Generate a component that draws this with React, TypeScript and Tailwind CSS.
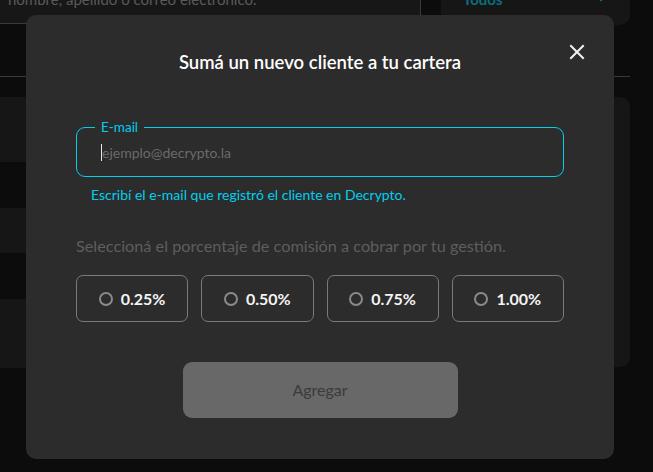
import { ChevronDown } from "lucide-react";

const options = ["0.25%", "0.50%", "0.75%", "1.00%"];

const rows = [
    { h: "h-[65px]", bg: "bg-[#161616]" },
    { h: "h-[46px]", bg: "bg-[#0c0c0c]" },
    { h: "h-[45px]", bg: "bg-[#161616]" },
    { h: "h-[46px]", bg: "bg-[#0c0c0c]" },
    { h: "h-[69px]", bg: "bg-[#161616]" },
];

const Background = () => (
    <div className="flex flex-col h-full">
        <div className="flex h-[25px]">
            <div className="w-[421px] h-[24px] bg-[#171717] border-b border-[#3a3a3a] border-r flex items-end pl-[8px] overflow-hidden">
                <span className="text-[15px] text-[#5a5a5a] leading-none relative -top-[16px]">
                    nombre, apellido o correo electrónico.
                </span>
            </div>
            <div className="w-[20px]" />
            <div className="w-[189px] bg-[#161616] rounded-b-[10px] flex justify-between px-[22px] overflow-hidden">
                <span className="text-[15px] text-[#0b6f7c] font-bold relative -top-[12px]">Todos</span>
                <ChevronDown size={14} className="text-[#0b6f7c] relative -top-[8px]" />
            </div>
        </div>
        <div className="w-[630px] h-[52px] border-b border-[#3a3a3a]" />
        <div className="h-[20px]" />
        <div className="flex w-[630px]">
            <div className="w-[300px] flex flex-col">
                {rows.map((r, i) => (
                    <div key={i} className={`${r.h} ${r.bg}`} />
                ))}
            </div>
            <div className="flex-1 h-[270px] bg-[#161616] rounded-r-[10px]" />
        </div>
    </div>
);

const CloseIcon = () => (
    <svg width="16" height="16" viewBox="0 0 16 16" fill="none" stroke="currentColor" strokeWidth="2" strokeLinecap="square">
        <path d="M2 2L14 14M14 2L2 14" />
    </svg>
);

export default function App() {
    return (
        <div
            className="relative w-[653px] h-[472px] bg-[#0c0c0c] overflow-hidden"
            style={{ fontFamily: "Lato, 'Noto Sans', sans-serif" }}
        >
            <Background />

            <div className="absolute left-[26px] top-[15px] w-[588px] h-[444px] bg-[#2c2c2c] rounded-[10px] flex flex-col items-center pt-[35px] px-[50px]">
                <button className="absolute right-[29px] top-[29px] text-[#f2f2f2]">
                    <CloseIcon />
                </button>

                <h2 className="h-[24px] text-[18.5px] font-semibold text-white leading-[24px]">
                    Sumá un nuevo cliente a tu cartera
                </h2>

                <div className="w-full mt-[53px]">
                    <div className="relative h-[50px] border border-[#00cfee] rounded-[9px] flex items-center pl-[24px]">
                        <span className="absolute left-[18px] -top-[10px] bg-[#2c2c2c] px-[6px] text-[13.5px] leading-[18px] text-[#00cfee]">
                            E-mail
                        </span>
                        <span className="w-px h-[17px] bg-[#e8e8e8]" />
                        <span className="text-[14px] text-[#6a6a6a]">ejemplo@decrypto.la</span>
                    </div>
                    <p className="mt-[9px] pl-[15px] text-[14px] leading-[18px] text-[#00cfee]">
                        Escribí el e-mail que registró el cliente en Decrypto.
                    </p>

                    <p className="mt-[32px] text-[16.25px] leading-[20px] text-[#5e5e5e]">
                        Seleccioná el porcentaje de comisión a cobrar por tu gestión.
                    </p>

                    <div className="mt-[19px] grid grid-cols-4 gap-[13px]">
                        {options.map((o) => (
                            <div
                                key={o}
                                className="h-[47px] border border-[#7a7a7a] rounded-[7px] flex items-center justify-center gap-[8px]"
                            >
                                <span className="w-[14px] h-[14px] rounded-full border-2 border-[#8a8a8a]" />
                                <span className="text-[16px] font-bold text-[#f4f4f4]">{o}</span>
                            </div>
                        ))}
                    </div>
                </div>

                <button className="mt-[40px] w-[275px] h-[56px] rounded-[9px] bg-[#686868] text-[16px] text-[#3b3b3b]">
                    Agregar
                </button>
            </div>
        </div>
    );
}
